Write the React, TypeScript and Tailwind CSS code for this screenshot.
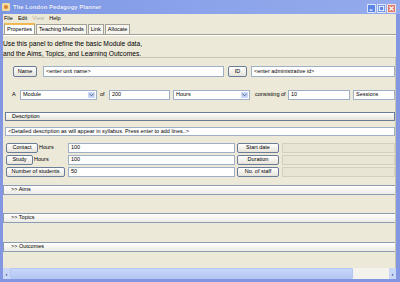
import { ReactNode } from 'react'

const font = "font-['Liberation_Sans',Arial,sans-serif]"

function XpButton({ children, className = '' }: { children: ReactNode; className?: string }) {
  return (
    <div
      className={`flex items-center justify-center rounded-[2px] border border-[#6b7c98] bg-gradient-to-b from-white to-[#e6e4da] text-[5.5px] leading-none text-black ${className}`}
    >
      {children}
    </div>
  )
}

function Field({ value, className = '' }: { value?: string; className?: string }) {
  return (
    <div className={`flex items-center border border-[#9fb0c6] bg-white pl-[2px] text-[5.5px] leading-none text-black whitespace-nowrap overflow-hidden ${className}`}>
      {value}
    </div>
  )
}

function Combo({ value, className = '' }: { value: string; className?: string }) {
  return (
    <div className={`flex items-stretch border border-[#9fb0c6] bg-white text-[5.5px] leading-none text-black ${className}`}>
      <div className="flex flex-1 items-center pl-[2px]">{value}</div>
      <div className="m-[1px] flex w-[7px] items-center justify-center rounded-[1px] bg-[#c6d4f7]">
        <svg width="5" height="4" viewBox="0 0 5 4">
          <path d="M0.5 0.8 L2.5 2.8 L4.5 0.8" fill="none" stroke="#4d6185" strokeWidth="1" />
        </svg>
      </div>
    </div>
  )
}

function SectionBar({ label, className = '' }: { label: string; className?: string }) {
  return (
    <div className={`flex h-[10px] items-center border-y border-l border-[#8c9cb3] bg-gradient-to-b from-white to-[#ecebe4] pl-[7px] text-[5.5px] leading-none text-black ${className}`}>
      {label}
    </div>
  )
}

function TitleButton({ kind }: { kind: 'min' | 'max' | 'close' }) {
  const bg = kind === 'close' ? 'bg-[#d97a6a]' : 'bg-[#5b86e6]'
  return (
    <div className={`flex h-[9px] w-[9px] items-center justify-center rounded-[1px] border border-white/80 ${bg}`}>
      <svg width="7" height="7" viewBox="0 0 7 7">
        {kind === 'min' && <rect x="1.5" y="4.5" width="3" height="1.2" fill="white" />}
        {kind === 'max' && <rect x="1.3" y="1.3" width="4.4" height="4.4" fill="none" stroke="white" strokeWidth="1" />}
        {kind === 'close' && <path d="M1.5 1.5 L5.5 5.5 M5.5 1.5 L1.5 5.5" stroke="white" strokeWidth="1.2" />}
      </svg>
    </div>
  )
}

export default function App() {
  return (
    <div className={`flex h-[282px] w-[400px] flex-col overflow-hidden bg-[#8296e2] ${font}`}>
      {/* title bar */}
      <div className="flex h-[14px] items-center bg-gradient-to-r from-[#7c97e4] via-[#8ba3ea] to-[#94aaec] pl-[2px] pr-[4px]">
        <div className="mr-[3px] flex h-[8px] w-[8px] items-center justify-center rounded-[1px] bg-[#f3d9a0]">
          <div className="h-[4px] w-[4px] rounded-full bg-[#d9822b]" />
        </div>
        <span className="text-[6px] font-bold leading-none text-[#f2f5ff] [text-shadow:0_0_1px_#5a74c8]">The London Pedagogy Planner</span>
        <div className="ml-auto flex gap-[1px] pt-[2px]">
          <TitleButton kind="min" />
          <TitleButton kind="max" />
          <TitleButton kind="close" />
        </div>
      </div>

      <div className="mb-[3px] ml-[3px] mr-[4px] flex flex-1 flex-col bg-[#ece9d8]">
        {/* menu */}
        <div className="flex h-[10px] items-center gap-[5px] pl-[1px] text-[5.5px] leading-none text-black">
          <span>File</span>
          <span>Edit</span>
          <span className="text-[#b5b3a8]">View</span>
          <span>Help</span>
        </div>

        {/* tabs */}
        <div className="flex h-[11px] items-end gap-[1px] border-b border-[#a3a195] pl-[1px] text-[5.5px] leading-none text-black">
          <div className="flex h-[11px] items-center border-x border-t-[2px] border-x-[#a3a195] border-t-[#f0b850] bg-white px-[2px]">Properties</div>
          <div className="flex h-[10px] items-center border-x border-t border-[#a3a195] bg-[#f6f5ef] px-[2px]">Teaching Methods</div>
          <div className="flex h-[10px] items-center border-x border-t border-[#a3a195] bg-[#f6f5ef] px-[2px]">Link</div>
          <div className="flex h-[10px] items-center border-x border-t border-[#a3a195] bg-[#f6f5ef] px-[2px]">Allocate</div>
        </div>

        {/* intro */}
        <div className="h-[22px] border-t border-white pt-[3px] text-[6.7px] leading-[9.5px] text-black">
          <div>Use this panel to define the basic Module data,</div>
          <div>and the Aims, Topics, and Learning Outcomes.</div>
        </div>

        {/* scroll pane */}
        <div className="flex flex-1 flex-col overflow-hidden border-r border-t border-[#c7c4b4]">
          {/* name row */}
          <div className="mt-[8px] flex h-[11px] items-stretch pl-[10px]">
            <XpButton className="w-[24px]">Name</XpButton>
            <Field value="<enter unit name>" className="ml-[6px] w-[181px]" />
            <XpButton className="ml-[4px] w-[19px]">ID</XpButton>
            <Field value="<enter administrative id>" className="ml-[4px] flex-1" />
          </div>

          {/* module row */}
          <div className="mt-[13px] flex h-[10px] items-stretch text-[5.5px] leading-none text-black">
            <span className="flex w-[17px] items-center pl-[9px]">A</span>
            <Combo value="Module" className="w-[77px]" />
            <span className="flex w-[12px] items-center pl-[3px]">of</span>
            <Field value="200" className="w-[61px]" />
            <Combo value="Hours" className="ml-[3px] w-[77px]" />
            <span className="flex w-[38px] items-center pl-[5px]">consisting of</span>
            <Field value="10" className="w-[62px]" />
            <Field value="Sessions" className="ml-[3px] flex-1" />
          </div>

          {/* description */}
          <XpButton className="ml-[2px] mt-[12px] h-[9px] !justify-start rounded-none pl-[6px]">Description</XpButton>
          <Field
            value="<Detailed description as will appear in syllabus. Press enter to add lines..>"
            className="ml-[2px] mt-[6px] h-[9px]"
          />

          {/* hours rows */}
          <div className="mt-[7px] flex flex-col gap-[2px]">
            {[
              { btn: 'Contact', w: 'w-[32px]', hours: true, val: '100', side: 'Start date' },
              { btn: 'Study', w: 'w-[27px]', hours: true, val: '100', side: 'Duration' },
              { btn: 'Number of students', w: 'w-[59px]', hours: false, val: '50', side: 'No. of staff' },
            ].map((r) => (
              <div key={r.btn} className="flex h-[10px] items-stretch">
                <div className="ml-[3px] flex w-[62px] items-stretch">
                  <XpButton className={r.w}>{r.btn}</XpButton>
                  {r.hours && <span className="flex items-center pl-[1px] text-[5.5px] leading-none text-black">Hours</span>}
                </div>
                <Field value={r.val} className="w-[167px]" />
                <XpButton className="ml-[2px] w-[42px]">{r.side}</XpButton>
                <div className="ml-[3px] flex-1 border border-[#d2cfbf] bg-[#e8e5d4]" />
              </div>
            ))}
          </div>

          <SectionBar label=">> Aims" className="mt-[8px]" />
          <SectionBar label=">> Topics" className="mt-[18px]" />
          <SectionBar label=">> Outcomes" className="mt-[19px]" />
        </div>

        {/* horizontal scrollbar */}
        <div className="flex h-[11px] items-stretch bg-[#f3f2ec]">
          <div className="flex w-[7px] items-center justify-center bg-[#c9d7f8] text-[6px] font-bold leading-none text-[#3a4f7a]">‹</div>
          <div className="w-[343px] rounded-[1px] border border-[#b3c5f0] bg-gradient-to-b from-[#c8d6fb] to-[#b4c6f2]" />
          <div className="flex-1" />
          <div className="flex w-[7px] items-center justify-center bg-[#c9d7f8] text-[6px] font-bold leading-none text-[#3a4f7a]">›</div>
        </div>
      </div>
    </div>
  )
}
